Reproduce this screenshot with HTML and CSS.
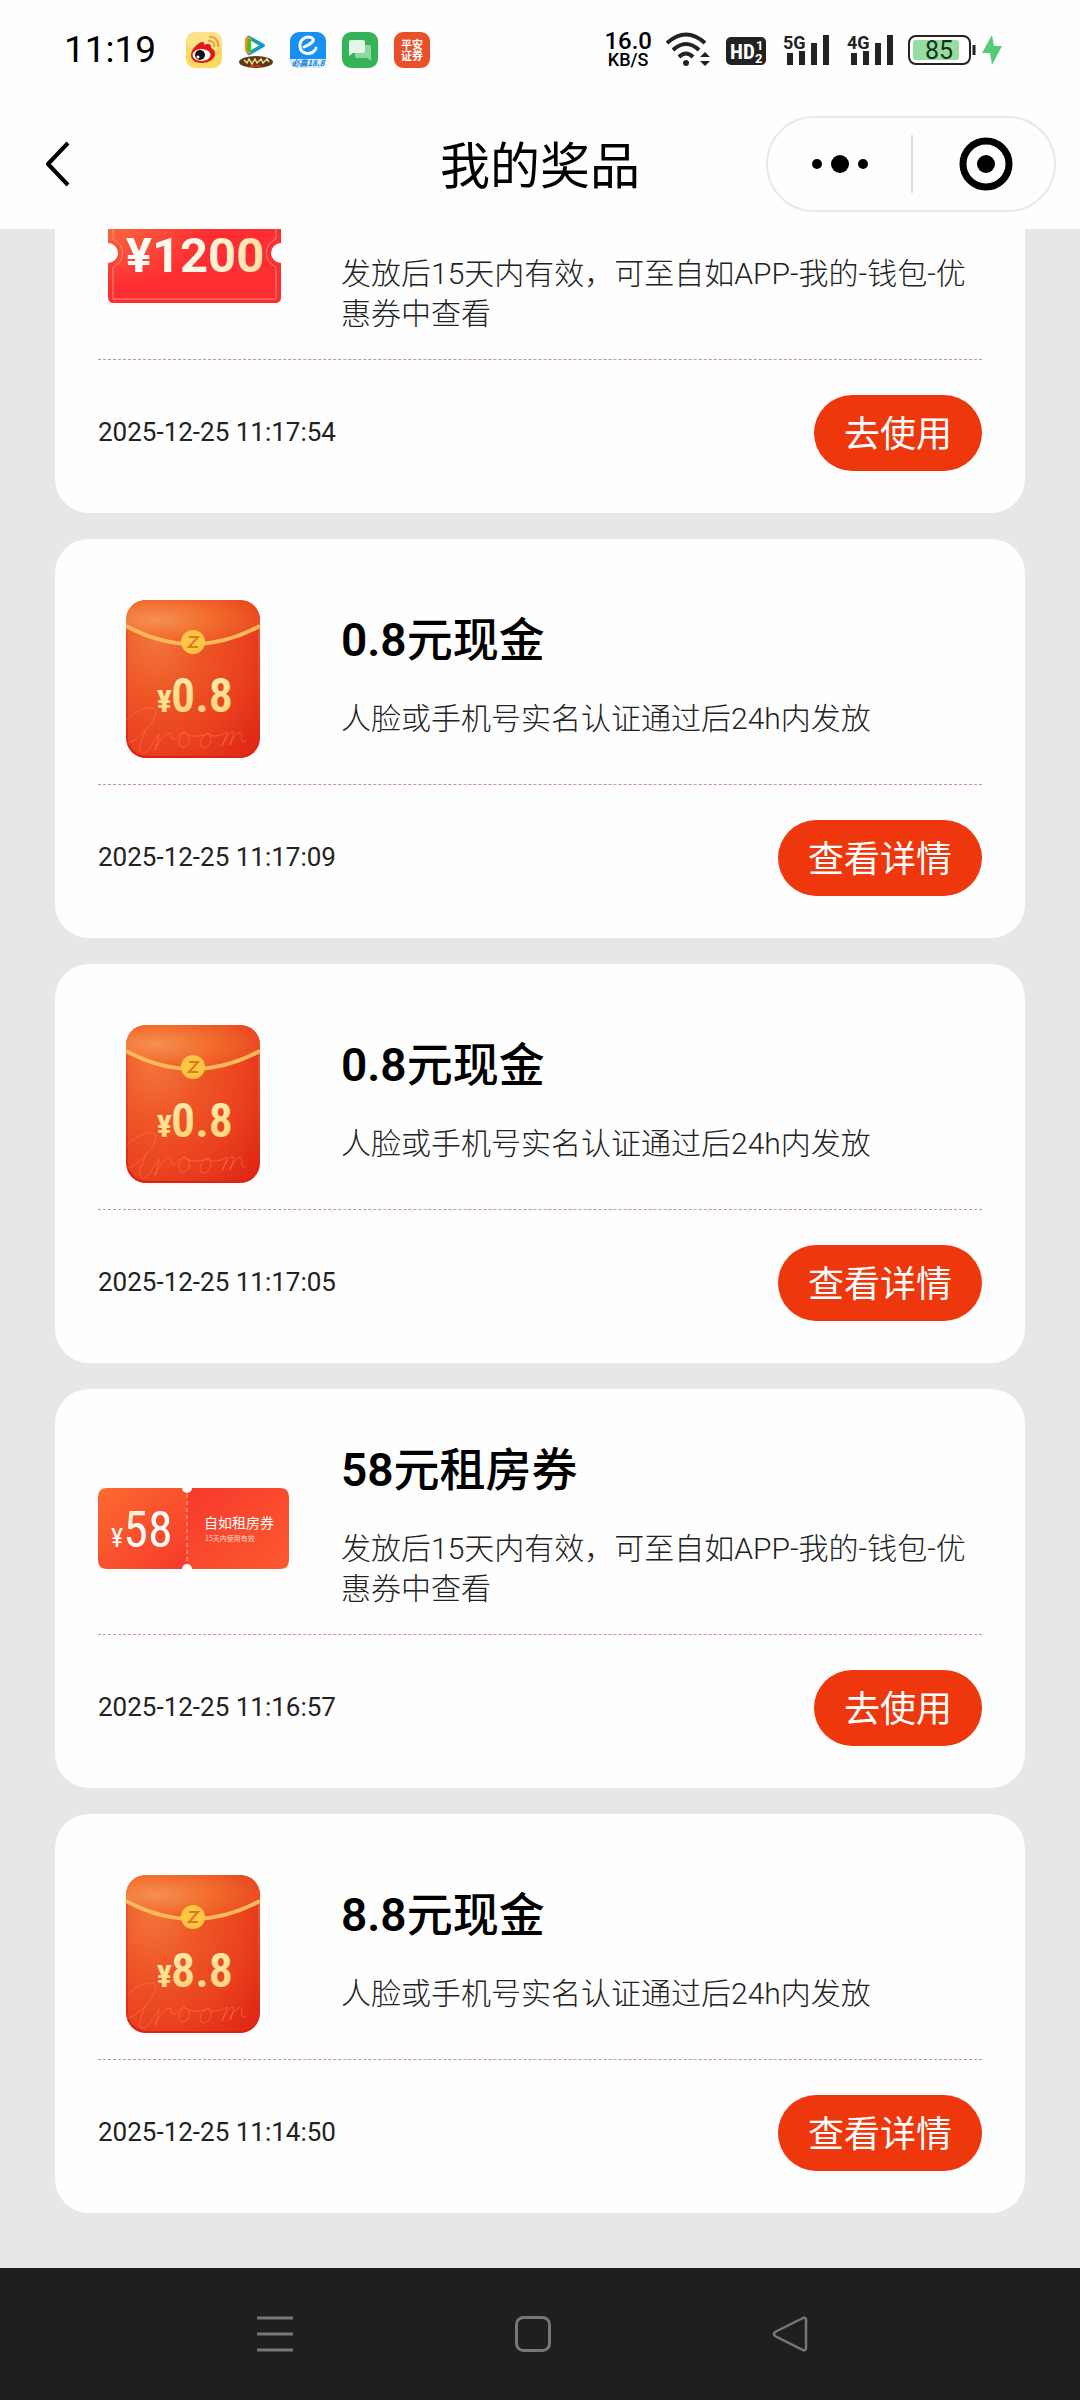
FILE: index.html
```html
<!DOCTYPE html>
<html lang="zh-CN">
<head>
<meta charset="utf-8">
<meta name="viewport" content="width=device-width, initial-scale=1">
<title>我的奖品</title>
<link rel="stylesheet" href="styles.css">
</head>
<body>
<svg class="defs" width="0" height="0" aria-hidden="true">
  <defs>
    <radialGradient id="env-body" cx="0.2" cy="0.25" r="1">
      <stop offset="0" stop-color="#f2743a"/><stop offset="0.35" stop-color="#ee5726"/><stop offset="0.7" stop-color="#ea421f"/><stop offset="1" stop-color="#e02a16"/>
    </radialGradient>
    <radialGradient id="env-flap" cx="0.22" cy="0.45" r="0.85">
      <stop offset="0" stop-color="#f59053"/><stop offset="0.5" stop-color="#f26c2c"/><stop offset="1" stop-color="#e8451f"/>
    </radialGradient>
    <linearGradient id="env-edge" x1="0" y1="0" x2="0" y2="1">
      <stop offset="0" stop-color="#f0603a"/><stop offset="1" stop-color="#dc2213"/>
    </linearGradient>
    <linearGradient id="gold" x1="0" y1="0" x2="0" y2="1">
      <stop offset="0" stop-color="#fff0b8"/><stop offset="1" stop-color="#ffcf6e"/>
    </linearGradient>
    <linearGradient id="cream" x1="0" y1="0" x2="1" y2="1">
      <stop offset="0" stop-color="#ffdf8a"/><stop offset="0.4" stop-color="#fff"/><stop offset="1" stop-color="#fff"/>
    </linearGradient>
    <linearGradient id="pale" x1="0" y1="0" x2="1" y2="0">
      <stop offset="0" stop-color="#fff"/><stop offset="0.55" stop-color="#fff6e4"/><stop offset="1" stop-color="#ffe2a4"/>
    </linearGradient>
    <linearGradient id="tk-left" x1="0" y1="0" x2="1" y2="1">
      <stop offset="0" stop-color="#fd6a30"/><stop offset="1" stop-color="#f63a2b"/>
    </linearGradient>
    <linearGradient id="tk-right" x1="0" y1="0" x2="1" y2="1">
      <stop offset="0" stop-color="#f7392d"/><stop offset="1" stop-color="#fc5a2e"/>
    </linearGradient>
    <radialGradient id="tk-red" cx="0" cy="0.25" r="0.6">
      <stop offset="0" stop-color="#f8683f"/><stop offset="1" stop-color="#fd2d32"/>
    </radialGradient>
    <symbol id="envelope" viewBox="0 0 191 191">
      <rect x="28" y="18" width="134" height="158" rx="20" fill="url(#env-edge)"/>
      <rect x="30" y="19" width="130" height="155" rx="19" fill="url(#env-body)"/>
      <path d="M28 43V38a20 20 0 0 1 20-20h94a20 20 0 0 1 20 20v5Q95 80 28 43z" fill="url(#env-flap)"/>
      <path d="M28 44Q95 80 162 44" fill="none" stroke="#fdb95a" stroke-width="4"/>
      <circle cx="95" cy="60" r="12" fill="#fcc544"/>
      <path d="M91 55h9l-9 10h9" fill="none" stroke="#d97a1c" stroke-width="2"/>
      <path d="M29 138c7-9 27-17 29-9 0 12-20 31-29 32M47 149c-3 9-8 20-3 22s10-9 17-19c0 7-3 12-4 16 4-9 10-17 14-17s0 6 4 6 8-7 12-7c-7 3-8 15-2 15 7 0 9-13 2-14 6 5 16 3 22 1-8 3-9 14-3 14 7 0 10-14 3-15 6 6 15 2 20-1-1 6-4 11-5 14 3-8 8-15 11-14s-3 9-3 13c3-8 8-14 11-12s-3 9 5 9" fill="none" stroke="#ff8158" stroke-opacity=".5" stroke-width="1"/>
    </symbol>
  </defs>
</svg>

<header class="top">
  <div class="status">
    <span class="clock">11:19</span>
    <div class="apps">
      <svg width="36" height="36" viewBox="0 0 36 36"><rect width="36" height="36" rx="9" fill="#fbd95f"/><rect width="36" height="18" rx="9" fill="#fce59a" opacity=".7"/><path d="M5 23c0-6 7-12 11-13 2 0 3 1 2 3 4-2 8-1 7 3 3 1 4 3 4 6 0 5-6 9-13 9S5 28 5 23z" fill="#e0191c"/><ellipse cx="15.500" cy="23" rx="9" ry="6" fill="#fff"/><circle cx="14" cy="23" r="5" fill="#111"/><circle cx="12" cy="25" r="1.500" fill="#fff"/><path d="M22 9c4-1 7 2 6 6M23 5c6-1 10 4 9 10" fill="none" stroke="#eba13a" stroke-width="2"/></svg>
      <svg width="36" height="36" viewBox="0 0 36 36"><path d="M9 5q0-2 3-1l14 8q2 1 0 3l-14 8q-3 1-3-2z" fill="#1296db"/><path d="M9 5q-2 0-2 3v9q0 4 3 5l3-1V5z" fill="#ff8b1a"/><path d="M10 6l12 7-10 7q-3 0-3-3z" fill="#39c51c"/><path d="M13 9l8 4.500-8 4.500z" fill="#fff"/><ellipse cx="18" cy="30" rx="17" ry="6" fill="#5b3a17"/><path d="M6 28l3 3 2-4 3 5 3-5 2 4 4-4 2 4 4-4 2 3" fill="none" stroke="#f2d28d" stroke-width="1.500"/><path d="M12 34h11" stroke="#c8331c" stroke-width="2"/></svg>
      <svg width="36" height="36" viewBox="0 0 36 36"><rect width="36" height="36" rx="9" fill="#1690f2"/><path d="M0 27h36a9 9 0 0 1-9 9H9a9 9 0 0 1-9-9z" fill="#d5edfd"/><path d="M25 18c-4 6-14 4-15-3C9 8 16 3 22 6c3 2 1 5-8 9" fill="none" stroke="#fff" stroke-width="3" stroke-linecap="round"/><circle cx="26" cy="16" r="1.500" fill="#fff"/><text x="18" y="34" text-anchor="middle" class="badge-text">必赢18.8</text></svg>
      <svg width="36" height="36" viewBox="0 0 36 36"><rect width="36" height="36" rx="9" fill="#34b457"/><path d="M15 13h12q2 0 2 2v14l-4-3H15q-2 0-2-2v-9q0-2 2-2z" fill="#8fd7a1"/><path d="M9 8h12q2 0 2 2v9q0 2-2 2H11l-4 3V10q0-2 2-2z" fill="#e4f6e8"/></svg>
      <svg width="36" height="36" viewBox="0 0 36 36"><rect width="36" height="36" rx="9" fill="#ea4f2b"/><text x="18" y="17" text-anchor="middle" class="pa-text">平安</text><text x="18" y="28" text-anchor="middle" class="pa-text">证券</text></svg>
    </div>
    <div class="signals">
      <div class="speed"><span class="rate">16.0</span><span class="unit">KB/S</span></div>
      <svg width="46" height="36" viewBox="0 0 46 36"><g fill="none" stroke="#222" stroke-width="4"><path d="M1 11Q20-6 39 11"/><path d="M7 18Q20 6 33 18"/><path d="M13 25Q20 18 27 25"/></g><circle cx="20" cy="31" r="3" fill="#222"/><path d="M34 25l5-5 5 5zM34 29l5 5 5-5z" fill="#222"/></svg>
      <svg width="40" height="36" viewBox="0 0 40 36"><rect y="5" width="40" height="28" rx="5" fill="#222"/><text x="4" y="27" class="hd-text">HD</text><text x="30" y="18" class="hd-small">1</text><text x="29" y="31" class="hd-small">2</text></svg>
      <svg width="50" height="36" viewBox="0 0 50 36"><text x="3" y="17" class="gen">5G</text><path d="M10 21v12M22 19v14M34 11v22M46 3v30" stroke="#222" stroke-width="6"/></svg>
      <svg width="50" height="36" viewBox="0 0 50 36"><text x="3" y="17" class="gen">4G</text><path d="M10 21v12M22 19v14M34 11v22M46 3v30" stroke="#222" stroke-width="6"/></svg>
      <svg width="96" height="36" viewBox="0 0 96 36"><rect x="1" y="4" width="61" height="28" rx="7" fill="#fff" stroke="#222" stroke-width="2"/><path d="M66 13v10" stroke="#222" stroke-width="3"/><rect x="5" y="8" width="46" height="20" rx="3" fill="#97dca0"/><text x="31" y="27" text-anchor="middle" class="batt">85</text><path d="M84 3L74 21h8l2 12 10-19h-8z" fill="#53cd72"/></svg>
    </div>
  </div>
  <nav class="nav">
    <button class="back" aria-label="返回"><svg width="26" height="48" viewBox="0 0 26 48"><path d="M23 3L3 24l20 21" fill="none" stroke="#000" stroke-width="4" stroke-linejoin="round"/></svg></button>
    <h1 class="page-title">我的奖品</h1>
    <div class="capsule">
      <button aria-label="更多"><svg width="58" height="20" viewBox="0 0 58 20"><circle cx="6" cy="10" r="5"/><circle cx="29" cy="10" r="9"/><circle cx="52" cy="10" r="5"/></svg></button>
      <button aria-label="关闭"><svg width="54" height="54" viewBox="0 0 54 54"><circle cx="27" cy="27" r="23" fill="none" stroke="#000" stroke-width="7"/><circle cx="27" cy="27" r="9"/></svg></button>
    </div>
  </nav>
</header>

<main class="scroller">
  <div class="prizes">
    <article class="card">
      <div class="card-body">
        <svg class="thumb" viewBox="0 0 191 191">
          <path d="M16 46h161q6 0 6 6v34a10 10 0 0 0 0 20v34q0 6-6 6H16q-6 0-6-6v-34a10 10 0 0 0 0-20V52q0-6 6-6z" fill="url(#tk-red)"/>
          <path d="M15 52v30a15 15 0 0 1 0 28v32h163v-32a15 15 0 0 1 0-28V52" fill="none" stroke="#ff8d7c" stroke-width="1"/>
          <text x="97" y="115" text-anchor="middle" class="amount-big" fill="url(#pale)">¥1200</text>
        </svg>
        <div class="info note-only">
          <p>发放后15天内有效，可至自如APP-我的-钱包-优惠券中查看</p>
        </div>
      </div>
      <footer class="card-foot"><time>2025-12-25 11:17:54</time><button class="pill">去使用</button></footer>
    </article>

    <article class="card">
      <div class="card-body">
        <svg class="thumb" viewBox="0 0 191 191"><use href="#envelope"/><text x="74" y="130" text-anchor="end" class="yen" fill="url(#gold)">¥</text><text x="104" y="130" text-anchor="middle" class="amount" fill="url(#gold)">0.8</text></svg>
        <div class="info">
          <h2>0.8元现金</h2>
          <p>人脸或手机号实名认证通过后24h内发放</p>
        </div>
      </div>
      <footer class="card-foot"><time>2025-12-25 11:17:09</time><button class="pill">查看详情</button></footer>
    </article>

    <article class="card">
      <div class="card-body">
        <svg class="thumb" viewBox="0 0 191 191"><use href="#envelope"/><text x="74" y="130" text-anchor="end" class="yen" fill="url(#gold)">¥</text><text x="104" y="130" text-anchor="middle" class="amount" fill="url(#gold)">0.8</text></svg>
        <div class="info">
          <h2>0.8元现金</h2>
          <p>人脸或手机号实名认证通过后24h内发放</p>
        </div>
      </div>
      <footer class="card-foot"><time>2025-12-25 11:17:05</time><button class="pill">查看详情</button></footer>
    </article>

    <article class="card">
      <div class="card-body">
        <svg class="thumb" viewBox="0 0 191 191">
          <path d="M9 56h75a5 5 0 0 0 5 5v71a5 5 0 0 0-5 5H9q-9 0-9-9V65q0-9 9-9z" fill="url(#tk-left)"/>
          <path d="M182 56H94a5 5 0 0 1-5 5v71a5 5 0 0 1 5 5h88q9 0 9-9V65q0-9-9-9z" fill="url(#tk-right)"/>
          <path d="M89 62v70" stroke="#ffb29c" stroke-width="1" stroke-dasharray="4 3"/>
          <text x="25" y="115" text-anchor="end" class="yen-thin">¥</text><text x="50" y="115" text-anchor="middle" class="amount-thin" fill="url(#cream)">58</text>
          <text x="106" y="96" class="tk-name">自如租房券</text>
          <text x="107" y="109" class="tk-note">15天内使用有效</text>
        </svg>
        <div class="info">
          <h2>58元租房券</h2>
          <p>发放后15天内有效，可至自如APP-我的-钱包-优惠券中查看</p>
        </div>
      </div>
      <footer class="card-foot"><time>2025-12-25 11:16:57</time><button class="pill">去使用</button></footer>
    </article>

    <article class="card">
      <div class="card-body">
        <svg class="thumb" viewBox="0 0 191 191"><use href="#envelope"/><text x="74" y="130" text-anchor="end" class="yen" fill="url(#gold)">¥</text><text x="104" y="130" text-anchor="middle" class="amount" fill="url(#gold)">8.8</text></svg>
        <div class="info">
          <h2>8.8元现金</h2>
          <p>人脸或手机号实名认证通过后24h内发放</p>
        </div>
      </div>
      <footer class="card-foot"><time>2025-12-25 11:14:50</time><button class="pill">查看详情</button></footer>
    </article>
  </div>
</main>

<nav class="system">
  <button aria-label="最近任务"><svg width="36" height="36" viewBox="0 0 36 36"><path d="M0 2h36M0 18h36M0 34h36" stroke="#777" stroke-width="3"/></svg></button>
  <button aria-label="主屏幕"><svg width="36" height="36" viewBox="0 0 36 36"><rect x="1.500" y="1.500" width="33" height="33" rx="7" fill="none" stroke="#777" stroke-width="3"/></svg></button>
  <button aria-label="返回上一级"><svg width="36" height="36" viewBox="0 0 36 36"><path d="M31 2L3 16q-2 2 0 4l28 14q3 1 3-2V4q0-3-3-2z" fill="none" stroke="#777" stroke-width="2.500"/></svg></button>
</nav>
</body>
</html>
```
FILE: styles.css
```css
* { box-sizing: border-box; }

body {
  margin: 0;
  height: 100vh;
  display: flex;
  flex-direction: column;
  background: #e7e7e7;
  color: #000;
  font-family: Roboto, "Noto Sans CJK SC", sans-serif;
}

svg { display: block; flex: none; }
.defs { position: absolute; }
h1, h2, p { margin: 0; }
button { border: 0; padding: 0; background: none; font-family: inherit; color: inherit; }

/* status bar and title bar */
.top { flex: none; background: #fefefe; }
.status {
  height: 100px;
  padding: 0 76px 0 64px;
  display: flex;
  align-items: center;
}
.clock { font-size: 37px; line-height: 40px; width: 122px; }
.apps { display: flex; gap: 16px; }
.signals { margin-left: auto; display: flex; align-items: center; gap: 14px; }
.speed { display: flex; flex-direction: column; align-items: center; font-weight: 500; }
.rate { font-size: 24px; line-height: 20px; }
.unit { font-size: 18px; line-height: 18px; }

.badge-text { font: italic 700 8px "Noto Sans CJK SC", sans-serif; fill: #1978c8; }
.pa-text { font: 700 11px "Noto Sans CJK SC", sans-serif; fill: #fff; }
.hd-text { font: 700 21px "Roboto Condensed", Roboto, sans-serif; fill: #fff; }
.hd-small { font: 700 13px Roboto, sans-serif; fill: #fff; }
.gen { font: 700 18px Roboto, sans-serif; fill: #222; }
.batt { font: 400 25px Roboto, sans-serif; fill: #14351c; }

.nav {
  height: 129px;
  padding: 16px 24px 17px;
  display: grid;
  grid-template-columns: 1fr auto 1fr;
  align-items: center;
}
.back { justify-self: start; padding-left: 21px; }
.page-title { font-size: 50px; line-height: 60px; font-weight: 400; padding-top: 6px; }
.capsule {
  justify-self: end;
  width: 290px;
  height: 96px;
  border: 2px solid #e8e8e8;
  border-radius: 48px;
  display: grid;
  grid-template-columns: 50% 50%;
  align-items: center;
}
.capsule button { height: 58px; display: grid; place-items: center; }
.capsule button + button { border-left: 2px solid #dcdcdc; padding-left: 4px; }

/* prize list, opened at its end */
.scroller {
  flex: 1 1 0;
  min-height: 0;
  overflow-y: auto;
  scrollbar-width: none;
  display: flex;
  flex-direction: column-reverse;
}
.prizes {
  flex: none;
  padding: 26px 55px 55px;
  display: flex;
  flex-direction: column;
  gap: 26px;
}
.card { background: #fefefe; border-radius: 34px; padding: 43px 43px 42px; }
.card-body { display: flex; align-items: center; gap: 52px; padding-bottom: 11px; }
.thumb { width: 191px; height: 191px; }
.info { flex: 1; display: flex; flex-direction: column; gap: 36px; padding-top: 1px; }
.info.note-only { padding-top: 83px; }
.info h2 {
  font-family: Roboto, "Noto Sans CJK SC Medium", "Noto Sans CJK SC", sans-serif;
  font-size: 46px;
  line-height: 46px;
  font-weight: 600;
}
.info p { font-size: 30px; line-height: 40px; font-weight: 300; color: #222; }
.card-foot {
  border-top: 1px dashed #cc9388;
  padding-top: 35px;
  display: flex;
  align-items: center;
  justify-content: space-between;
}
.card-foot time { font-size: 26px; line-height: 32px; color: #222; padding-bottom: 2px; }
.pill {
  height: 76px;
  padding: 4px 30px 0;
  border-radius: 38px;
  background: #ee370c;
  color: #fff;
  font-size: 36px;
  line-height: 52px;
}

/* figures printed on the envelopes and tickets */
.yen { font: 700 32px "Roboto Condensed", Roboto, sans-serif; }
.amount { font: 600 48px "Roboto Condensed", Roboto, sans-serif; }
.amount-big { font: 700 49px Roboto, sans-serif; }
.yen-thin { font: 400 26px "Roboto Condensed", Roboto, sans-serif; fill: #fff; }
.amount-thin { font: 400 50px "Roboto Condensed", Roboto, sans-serif; }
.tk-name { font: 400 14px "Noto Sans CJK SC", sans-serif; fill: #fff; }
.tk-note { font: 400 7px "Noto Sans CJK SC", sans-serif; fill: #ffd9cf; }

/* system navigation */
.system {
  flex: none;
  height: 132px;
  padding: 0 272px 0 257px;
  background: #1f1f1f;
  display: flex;
  align-items: center;
  justify-content: space-between;
}
```
